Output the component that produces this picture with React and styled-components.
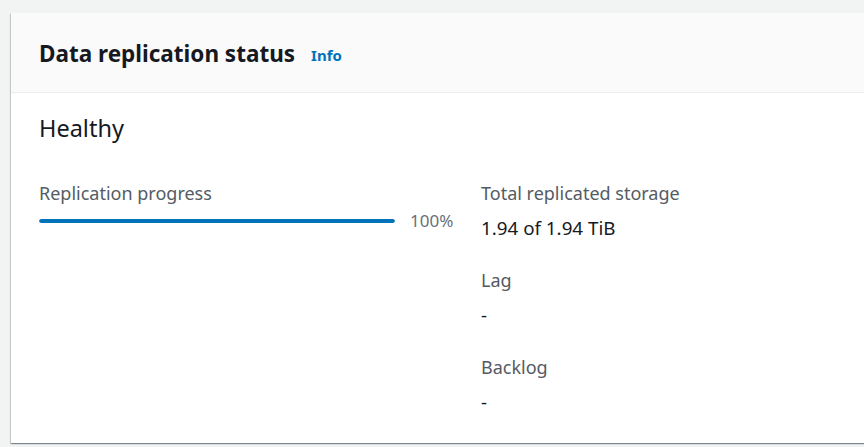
import React from "react";
import styled, { createGlobalStyle } from "styled-components";

const Global = createGlobalStyle`
html, body {
    margin: 0;
    padding: 0;
    background: #f2f3f3;
    overflow: hidden;
}
body {
    font-family: "Noto Sans", "Open Sans", Arial, sans-serif;
    color: #16191f;
}
`;

const Viewport = styled.div`
width: 100vw;
height: 100vh;
overflow: hidden;
`;

const Page = styled.div`
padding: 13px 0 0 11px;
width: 900px;
`;

const Card = styled.div`
background: #fff;
box-shadow: 0 1px 1px 0 rgba(0, 28, 36, 0.3), 1px 1px 1px 0 rgba(0, 28, 36, 0.15), -1px 1px 1px 0 rgba(0, 28, 36, 0.15);
`;

const Header = styled.div`
display: flex;
align-items: baseline;
height: 80px;
box-sizing: border-box;
padding: 26px 28px 0;
background: #fafafa;
border-bottom: 1px solid #eaeded;
`;

const Title = styled.h2`
margin: 0;
font-size: 22.5px;
line-height: 30px;
font-weight: 700;
color: #16191f;
`;

const InfoLink = styled.a`
margin-left: 16px;
font-size: 15px;
font-weight: 700;
color: #0073bb;
text-decoration: none;
position: relative;
top: -1px;
`;

const Body = styled.div`
padding: 20px 28px 30px;
`;

const Status = styled.div`
font-size: 23.5px;
line-height: 30px;
margin-bottom: 39px;
`;

const Columns = styled.div`
display: grid;
grid-template-columns: 422px 1fr;
column-gap: 20px;
`;

const Label = styled.div`
font-size: 18px;
line-height: 22px;
color: #545b64;
`;

const Value = styled.div`
font-size: 18.8px;
line-height: 22px;
color: #16191f;
margin-top: 13px;
margin-bottom: ${(p) => p.last ? "0" : "30px"};
`;

const ProgressRow = styled.div`
display: flex;
align-items: center;
margin-top: 6px;
`;

const Track = styled.div`
width: 356px;
height: 4px;
border-radius: 2px;
background: #eaeded;
overflow: hidden;
`;

const Fill = styled.div`
height: 100%;
background: #0073bb;
border-radius: 2px;
`;

const Percent = styled.span`
margin-left: 15px;
font-size: 17px;
line-height: 22px;
color: #687078;
`;

const App = () => {
    const progress = 100;
    return (
        <Viewport>
            <Global />
            <Page>
                <Card>
                    <Header>
                        <Title>Data replication status</Title>
                        <InfoLink href="#">Info</InfoLink>
                    </Header>
                    <Body>
                        <Status>Healthy</Status>
                        <Columns>
                            <div>
                                <Label>Replication progress</Label>
                                <ProgressRow>
                                    <Track>
                                        <Fill style={{ width: progress + "%" }} />
                                    </Track>
                                    <Percent>{progress}%</Percent>
                                </ProgressRow>
                            </div>
                            <div>
                                <Label>Total replicated storage</Label>
                                <Value>1.94 of 1.94 TiB</Value>
                                <Label>Lag</Label>
                                <Value>-</Value>
                                <Label>Backlog</Label>
                                <Value last>-</Value>
                            </div>
                        </Columns>
                    </Body>
                </Card>
            </Page>
        </Viewport>
    );
};

export default App;
